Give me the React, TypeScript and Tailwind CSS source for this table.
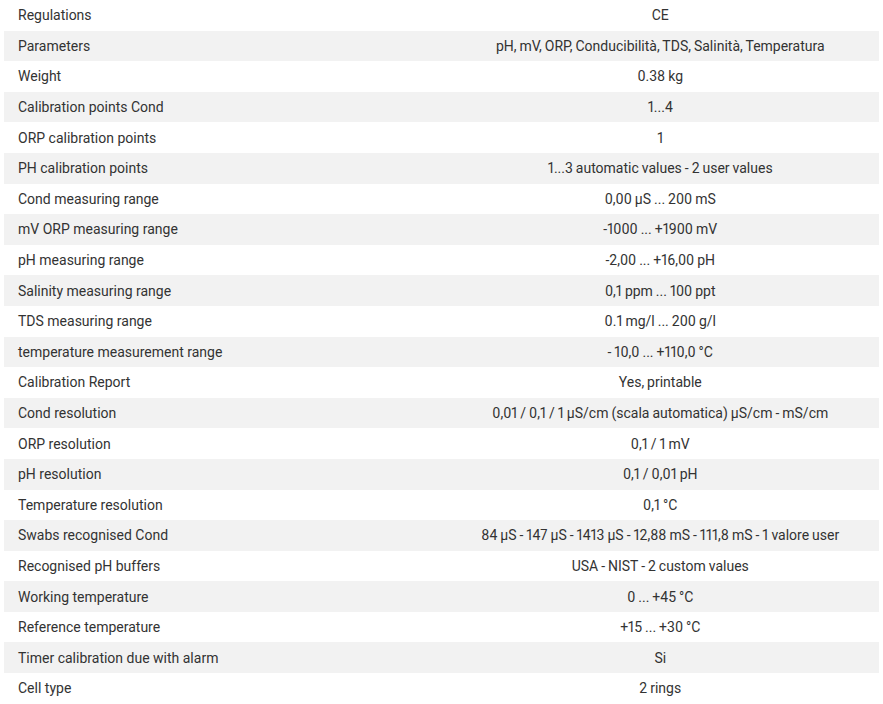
import React from "react";

const rows: [string, string][] = [
  ["Regulations", "CE"],
  ["Parameters", "pH, mV, ORP, Conducibilità, TDS, Salinità, Temperatura"],
  ["Weight", "0.38 kg"],
  ["Calibration points Cond", "1...4"],
  ["ORP calibration points", "1"],
  ["PH calibration points", "1...3 automatic values - 2 user values"],
  ["Cond measuring range", "0,00 µS ... 200 mS"],
  ["mV ORP measuring range", "-1000 ... +1900 mV"],
  ["pH measuring range", "-2,00 ... +16,00 pH"],
  ["Salinity measuring range", "0,1 ppm ... 100 ppt"],
  ["TDS measuring range", "0.1 mg/l ... 200 g/l"],
  ["temperature measurement range", "- 10,0 ... +110,0 °C"],
  ["Calibration Report", "Yes, printable"],
  ["Cond resolution", "0,01 / 0,1 / 1 µS/cm (scala automatica) µS/cm - mS/cm"],
  ["ORP resolution", "0,1 / 1 mV"],
  ["pH resolution", "0,1 / 0,01 pH"],
  ["Temperature resolution", "0,1 °C"],
  ["Swabs recognised Cond", "84 µS - 147 µS - 1413 µS - 12,88 mS - 111,8 mS - 1 valore user"],
  ["Recognised pH buffers", "USA - NIST - 2 custom values"],
  ["Working temperature", "0 ... +45 °C"],
  ["Reference temperature", "+15 ... +30 °C"],
  ["Timer calibration due with alarm", "Si"],
  ["Cell type", "2 rings"],
];

export default function App() {
  return (
    <div className="w-[883px] h-[704px] bg-white px-[4px] overflow-hidden" style={{ fontFamily: "Roboto, 'Liberation Sans', sans-serif" }}>
      <div className="flex flex-col">
        {rows.map(([k, v], i) => (
          <div
            key={k}
            className={`grid grid-cols-2 h-[30.6px] pt-[1px] items-center text-[14px] text-[#333333] ${i % 2 === 1 ? "bg-[#f2f2f2]" : "bg-white"}`}
          >
            <div className="pl-[14px] whitespace-nowrap">{k}</div>
            <div className="text-center whitespace-nowrap proportional-nums [word-spacing:-0.5px]">{v}</div>
          </div>
        ))}
      </div>
    </div>
  );
}
